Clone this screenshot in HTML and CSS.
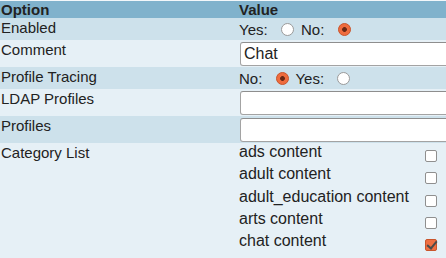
FILE: index.html
```html
<!DOCTYPE html>
<html lang="en">
<head>
  <meta charset="UTF-8">
  <title>Options</title>
  <link rel="stylesheet" href="styles.css">
</head>
<body>
  <table id="options">
    <thead>
      <tr>
        <th class="opt-col">Option</th>
        <th class="val-col">Value</th>
      </tr>
    </thead>
    <tbody>
      <tr class="dark radio-row">
        <td class="label">Enabled</td>
        <td class="value">Yes: <input type="radio" name="enabled"> No: <input type="radio" name="enabled" checked></td>
      </tr>
      <tr class="light input-row">
        <td class="label">Comment</td>
        <td class="value"><input type="text" class="text-field" value="Chat"></td>
      </tr>
      <tr class="dark radio-row">
        <td class="label">Profile Tracing</td>
        <td class="value">No: <input type="radio" name="tracing" checked> Yes: <input type="radio" name="tracing"></td>
      </tr>
      <tr class="light input-row">
        <td class="label">LDAP Profiles</td>
        <td class="value"><input type="text" class="text-field"></td>
      </tr>
      <tr class="dark input-row">
        <td class="label">Profiles</td>
        <td class="value"><input type="text" class="text-field"></td>
      </tr>
      <tr class="light list-row">
        <td class="label">Category List</td>
        <td class="value">
          <table id="categories">
            <tr><td class="cat-name">ads content</td><td class="cat-box"><input type="checkbox"></td></tr>
            <tr><td class="cat-name">adult content</td><td class="cat-box"><input type="checkbox"></td></tr>
            <tr><td class="cat-name">adult_education content</td><td class="cat-box"><input type="checkbox"></td></tr>
            <tr><td class="cat-name">arts content</td><td class="cat-box"><input type="checkbox"></td></tr>
            <tr><td class="cat-name">chat content</td><td class="cat-box"><input type="checkbox" checked></td></tr>
          </table>
        </td>
      </tr>
    </tbody>
  </table>
</body>
</html>
```

FILE: styles.css
```css
html, body {
  margin: 0;
  padding: 0;
  background: #f2f7fa;
  font-family: "Liberation Sans", Arial, sans-serif;
  font-size: 15px;
  line-height: 17px;
  color: #222;
}
#options {
  border-collapse: collapse;
  border-spacing: 0;
  width: 470px;
  height: 257px;
  margin-top: 1px;
}
#options th {
  background: #80b2cc;
  text-align: left;
  font-weight: bold;
  padding: 0;
  height: 17px;
  vertical-align: top;
}
.opt-col {
  width: 239px;
  padding-left: 1px !important;
}
#options td {
  vertical-align: top;
  padding: 0;
}
.dark {
  background: #cde1eb;
}
.light {
  background: #e6f0f6;
}
.label {
  padding: 1px 0 0 1px !important;
}
.radio-row {
  height: 22px;
}
.radio-row .value {
  padding-top: 3px !important;
}
.input-row {
  height: 27px;
}
.input-row .value {
  padding-top: 1px !important;
}
.text-field {
  box-sizing: border-box;
  width: 230px;
  height: 24px;
  margin: 1px 0 0 1px;
  padding: 0 3px;
  border: 1px solid #a3a3a3;
  border-top-color: #8e8e8e;
  border-radius: 3px;
  background: #fff;
  font-family: "Liberation Sans", Arial, sans-serif;
  font-size: 16px;
  color: #222;
  outline: none;
}
input[type="radio"] {
  appearance: none;
  -webkit-appearance: none;
  box-sizing: border-box;
  width: 13px;
  height: 13px;
  margin: 0 3px 0 9px;
  border: 1px solid #9a9a9a;
  border-radius: 50%;
  background: #fff;
  vertical-align: -1px;
}
input[type="radio"]:checked {
  border-color: #c9552c;
  background: radial-gradient(circle, #6a2814 0, #6a2814 2px, #ef6c3e 2.8px);
}
.list-row .value {
  padding: 0;
}
#categories {
  border-collapse: collapse;
  border-spacing: 0;
  font-size: 16px;
}
#categories tr {
  height: 22.25px;
}
#categories td {
  padding: 0;
  vertical-align: top;
}
.cat-name {
  width: 186px;
}
input[type="checkbox"] {
  appearance: none;
  -webkit-appearance: none;
  position: relative;
  box-sizing: border-box;
  width: 12px;
  height: 12px;
  margin: 7px 0 0 0;
  border: 1px solid #8f8f8f;
  border-radius: 2px;
  background: #fff;
  display: block;
}
input[type="checkbox"]:checked {
  border-color: #c9552c;
  background: #ef6f42;
}
input[type="checkbox"]:checked::after {
  content: "";
  position: absolute;
  left: 3px;
  top: -1px;
  width: 4px;
  height: 8px;
  border-right: 2px solid #4b4b4b;
  border-bottom: 2px solid #4b4b4b;
  transform: rotate(40deg);
}
```
